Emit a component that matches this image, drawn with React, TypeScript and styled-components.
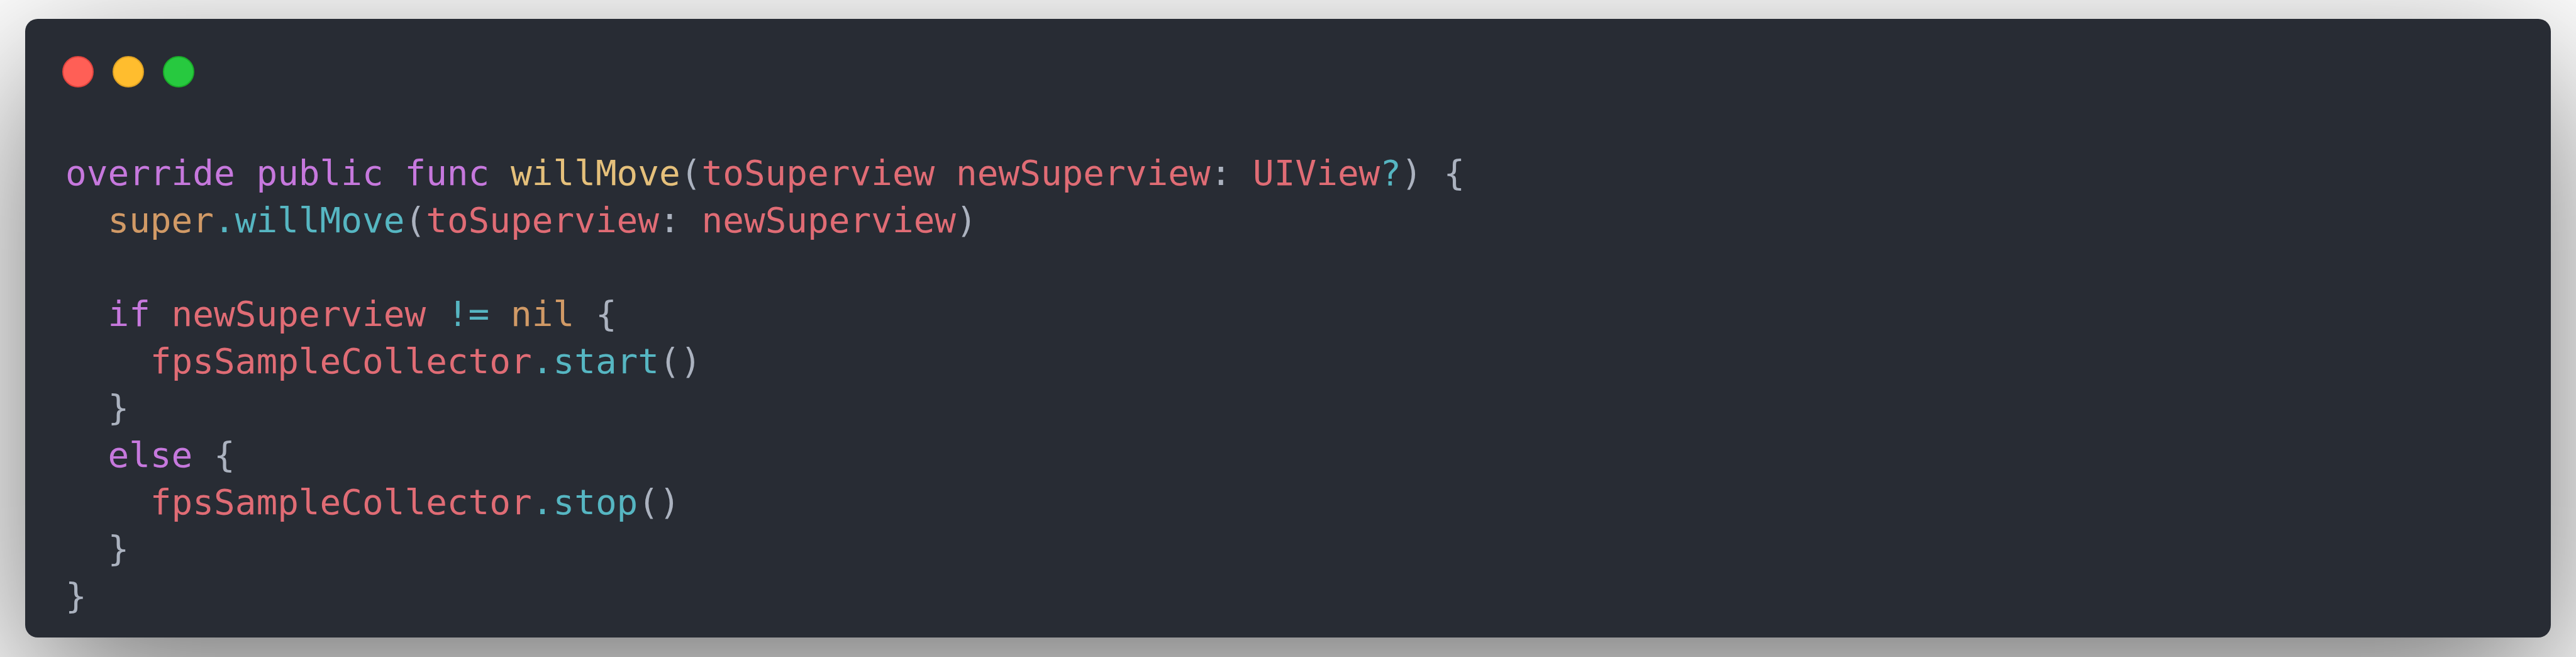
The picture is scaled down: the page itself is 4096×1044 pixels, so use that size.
import React from "react";
import styled, { createGlobalStyle } from "styled-components";

const GlobalStyle = createGlobalStyle`
  html, body {
    margin: 0;
    padding: 0;
    background: #ffffff;
  }
  body {
    font-family: "DejaVu Sans Mono", "Liberation Mono", monospace;
  }
`;

const Page = styled.div`
  width: 4096px;
  height: 1044px;
  box-sizing: border-box;
  padding: 30px 40px 31px 40px;
  background: #ffffff;
  overflow: hidden;
`;

const Window = styled.div`
  box-sizing: border-box;
  width: 4016px;
  height: 983px;
  background: #282c34;
  border-radius: 20px;
  box-shadow: 0 80px 272px rgba(0, 0, 0, 0.55);
  padding: 59px 64px 0 59px;
  display: flex;
  flex-direction: column;
`;

const Controls = styled.div`
  display: flex;
  gap: 30px;
  height: 50px;
  align-items: center;
`;

const Light = styled.span<{ $fill: string; $stroke: string }>`
  display: block;
  box-sizing: border-box;
  width: 50px;
  height: 50px;
  border-radius: 50%;
  background: ${(p) => p.$fill};
  border: 2px solid ${(p) => p.$stroke};
`;

const Code = styled.pre`
  margin: 99px 0 0 5px;
  font-family: "DejaVu Sans Mono", "Liberation Mono", monospace;
  font-size: 56px;
  line-height: 74.67px;
  color: #abb2bf;
  white-space: pre;
`;

const Line = styled.div`
  height: 74.67px;
`;

const colors = {
  k: "#c678dd",
  f: "#e5c07b",
  p: "#abb2bf",
  v: "#e06c75",
  c: "#56b6c2",
  o: "#d19a66",
};

type Kind = keyof typeof colors;

const Tok = styled.span<{ $k: Kind }>`
  color: ${(p) => colors[p.$k]};
`;

const lines: [Kind, string][][] = [
  [
    ["k", "override public func "],
    ["f", "willMove"],
    ["p", "("],
    ["v", "toSuperview newSuperview"],
    ["p", ": "],
    ["v", "UIView"],
    ["c", "?"],
    ["p", ") {"],
  ],
  [
    ["p", "  "],
    ["o", "super"],
    ["c", ".willMove"],
    ["p", "("],
    ["v", "toSuperview"],
    ["p", ": "],
    ["v", "newSuperview"],
    ["p", ")"],
  ],
  [],
  [
    ["p", "  "],
    ["k", "if "],
    ["v", "newSuperview "],
    ["c", "!="],
    ["p", " "],
    ["o", "nil"],
    ["p", " {"],
  ],
  [
    ["p", "    "],
    ["v", "fpsSampleCollector"],
    ["c", ".start"],
    ["p", "()"],
  ],
  [["p", "  }"]],
  [
    ["p", "  "],
    ["k", "else"],
    ["p", " {"],
  ],
  [
    ["p", "    "],
    ["v", "fpsSampleCollector"],
    ["c", ".stop"],
    ["p", "()"],
  ],
  [["p", "  }"]],
  [["p", "}"]],
];

export default function App() {
  return (
    <>
      <GlobalStyle />
      <Page>
        <Window>
          <Controls>
            <Light $fill="#ff5f56" $stroke="#e0443e" />
            <Light $fill="#ffbd2e" $stroke="#dea123" />
            <Light $fill="#27c93f" $stroke="#1aab29" />
          </Controls>
          <Code>
            {lines.map((line, i) => (
              <Line key={i}>
                {line.map(([k, t], j) => (
                  <Tok key={j} $k={k}>
                    {t}
                  </Tok>
                ))}
              </Line>
            ))}
          </Code>
        </Window>
      </Page>
    </>
  );
}
